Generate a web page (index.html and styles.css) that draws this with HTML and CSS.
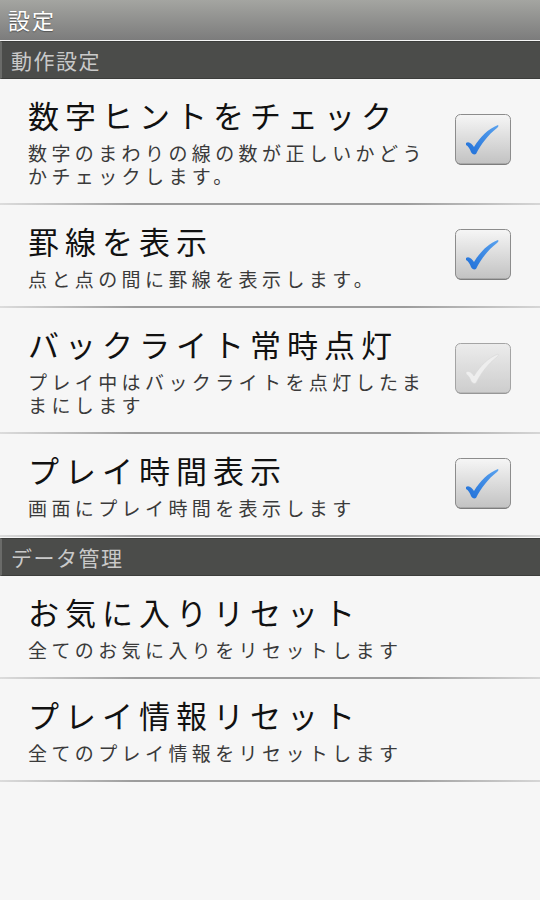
FILE: index.html
```html
<!DOCTYPE html>
<html>
<head>
<meta charset="utf-8">
<title>設定</title>
<link rel="stylesheet" href="styles.css">
</head>
<body>
<div class="titlebar">設定</div>

<div class="section">動作設定</div>

<div class="row">
    <div class="text">
        <div class="label">数字ヒントをチェック</div>
        <div class="summary">数字のまわりの線の数が正しいかどうかチェックします。</div>
    </div>
    <svg class="check" viewBox="0 0 56 52"><use href="#box-on"/></svg>
</div>

<div class="row">
    <div class="text">
        <div class="label">罫線を表示</div>
        <div class="summary">点と点の間に罫線を表示します。</div>
    </div>
    <svg class="check" viewBox="0 0 56 52"><use href="#box-on"/></svg>
</div>

<div class="row">
    <div class="text">
        <div class="label">バックライト常時点灯</div>
        <div class="summary">プレイ中はバックライトを点灯したままにします</div>
    </div>
    <svg class="check" viewBox="0 0 56 52"><use href="#box-off"/></svg>
</div>

<div class="row">
    <div class="text">
        <div class="label">プレイ時間表示</div>
        <div class="summary">画面にプレイ時間を表示します</div>
    </div>
    <svg class="check" viewBox="0 0 56 52"><use href="#box-on"/></svg>
</div>

<div class="section">データ管理</div>

<div class="row">
    <div class="text">
        <div class="label">お気に入りリセット</div>
        <div class="summary">全てのお気に入りをリセットします</div>
    </div>
</div>

<div class="row">
    <div class="text">
        <div class="label">プレイ情報リセット</div>
        <div class="summary">全てのプレイ情報をリセットします</div>
    </div>
</div>

<svg class="defs" width="0" height="0">
    <defs>
        <linearGradient id="boxfill" x1="0" y1="0" x2="0" y2="1">
            <stop offset="0" stop-color="#f6f6f6"/>
            <stop offset="1" stop-color="#c2c2c2"/>
        </linearGradient>
        <linearGradient id="boxfill-off" x1="0" y1="0" x2="0" y2="1">
            <stop offset="0" stop-color="#ececec"/>
            <stop offset="1" stop-color="#cdcdcd"/>
        </linearGradient>
        <linearGradient id="tick" x1="0" y1="1" x2="1" y2="0">
            <stop offset="0" stop-color="#1f6fd8"/>
            <stop offset="1" stop-color="#5aa2ee"/>
        </linearGradient>
        <g id="box-on">
            <rect x="1" y="2" width="54" height="49" rx="5" fill="#6e6e6e"/>
            <rect x="0.5" y="0.5" width="55" height="49.5" rx="5" fill="url(#boxfill)" stroke="#8c8c8c"/>
            <path d="M11 29 C14 27 17 30 19 33 C25 23 33 15 43 11 C44 12 43 13 42 14 C33 21 26 30 21 40 C19 41 17 40 16 38 C15 35 13 32 11 31 Z" fill="url(#tick)"/>
        </g>
        <g id="box-off">
            <rect x="1" y="2" width="54" height="49" rx="5" fill="#8a8a8a"/>
            <rect x="0.5" y="0.5" width="55" height="49.5" rx="5" fill="url(#boxfill-off)" stroke="#a4a4a4"/>
            <path d="M11 29 C14 27 17 30 19 33 C25 23 33 15 43 11 C44 12 43 13 42 14 C33 21 26 30 21 40 C19 41 17 40 16 38 C15 35 13 32 11 31 Z" fill="#eeeeee" stroke="#d6d6d6" stroke-width="0.6"/>
        </g>
    </defs>
</svg>
</body>
</html>
```

FILE: styles.css
```css
body
{
    margin: 0;
    background: #f6f6f6;
    font-family: "Noto Sans CJK JP", "Noto Sans", sans-serif;
}
.titlebar
{
    height: 40px;
    line-height: 38px;
    padding-left: 8px;
    background: linear-gradient(#a4a5a1, #7c7c7c);
    color: #fff;
    font-size: 22px;
    letter-spacing: 2px;
    text-shadow: 0 1px 1px #555;
}
.section
{
    height: 36px;
    line-height: 36px;
    margin-top: 1px;
    padding-left: 9px;
    background: #4b4c4a;
    border-left: 2px solid #6a6b69;
    border-top: 1px solid #3c3d3b;
    border-bottom: 1px solid #3c3d3b;
    color: #c9c9c9;
    font-size: 21px;
    letter-spacing: 1.5px;
}
.row
{
    position: relative;
    display: flex;
    align-items: center;
    padding: 14px 29px 18px 28px;
}
.row::after
{
    content: "";
    position: absolute;
    left: 0;
    right: 0;
    bottom: 0;
    height: 2px;
    background: linear-gradient(to right, #dcdcdc, #9c9c9c 25%, #9c9c9c 75%, #d6d6d6);
}
.text
{
    flex: 1;
    min-width: 0;
}
.label
{
    font-size: 31px;
    line-height: 44px;
    letter-spacing: 6px;
    color: #111;
    white-space: nowrap;
}
.summary
{
    margin-top: 4px;
    font-size: 19px;
    line-height: 23px;
    letter-spacing: 4.4px;
    color: #3a3a3a;
}
.check
{
    flex: none;
    width: 56px;
    height: 52px;
    margin-left: 14px;
}
.defs
{
    position: absolute;
}
```
